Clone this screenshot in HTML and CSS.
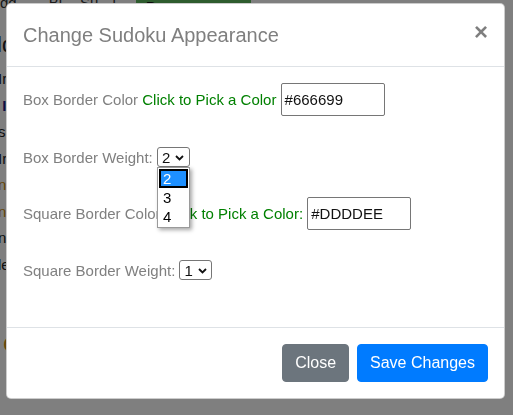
FILE: index.html
```html
<!DOCTYPE html>
<html>
<head>
<meta charset="utf-8">
<link rel="stylesheet" href="styles.css">
</head>
<body>
<div class="page">
  <div class="topbar">
    <span class="tb-a">dd</span>
    <span class="tb-b">Bl</span>
    <span class="tb-c">Su</span>
    <span class="tb-d">l</span>
    <span class="tb-btn"><span>P</span><span>▾</span></span>
  </div>
  <div class="bg-title">ld</div>
  <div class="bg-line">Ir</div>
  <div class="bg-line navy">&nbsp;I</div>
  <div class="bg-line">s</div>
  <div class="bg-line">Ir</div>
  <div class="bg-line brown">n</div>
  <div class="bg-line brown">n</div>
  <div class="bg-line">n</div>
  <div class="bg-line">le</div>
  <div class="bg-big brown">C</div>
</div>

<div class="backdrop"></div>

<div class="modal">
  <div class="modal-dialog">
    <div class="modal-header">
      <h5 class="modal-title">Change Sudoku Appearance</h5>
      <button class="close" type="button">×</button>
    </div>
    <div class="modal-body">
      <div class="row r1">
        <span class="label">Box Border Color</span>
        <span class="pick">Click to Pick a Color</span>
        <span class="hex">#666699</span>
      </div>
      <div class="row r2">
        <span class="label">Box Border Weight:</span>
        <span class="select">
          <span class="val">2</span>
          <svg class="chev" width="9" height="6" viewBox="0 0 9 6"><path d="M1 1 L4.5 4.5 L8 1" fill="none" stroke="#111" stroke-width="1.8"/></svg>
          <span class="options">
            <span class="opt sel">2</span>
            <span class="opt">3</span>
            <span class="opt">4</span>
          </span>
        </span>
      </div>
      <div class="row r3">
        <span class="label">Square Border Color</span>
        <span class="pick">Click to Pick a Color:</span>
        <span class="hex">#DDDDEE</span>
      </div>
      <div class="row r4">
        <span class="label">Square Border Weight:</span>
        <span class="select">
          <span class="val">1</span>
          <svg class="chev" width="9" height="6" viewBox="0 0 9 6"><path d="M1 1 L4.5 4.5 L8 1" fill="none" stroke="#111" stroke-width="1.8"/></svg>
        </span>
      </div>
    </div>
    <div class="modal-footer">
      <button class="btn btn-secondary" type="button">Close</button>
      <button class="btn btn-primary" type="button">Save Changes</button>
    </div>
  </div>
</div>
</body>
</html>
```
FILE: styles.css
```css
html, body {
  margin: 0;
  padding: 0;
  background: #fff;
  font-family: "Liberation Sans", Arial, sans-serif;
  overflow: hidden;
}

.page {
  width: 513px;
  height: 415px;
  color: #222;
  font-size: 15px;
}

.topbar {
  display: flex;
  align-items: flex-start;
  height: 14px;
  margin-top: -6px;
  font-size: 15px;
  line-height: 17px;
  color: #333;
}
.tb-a { margin-left: 0; }
.tb-b { margin-left: 32px; }
.tb-c { margin-left: 18px; }
.tb-d { margin-left: 14px; }
.tb-btn {
  display: flex;
  justify-content: space-between;
  width: 95px;
  height: 20px;
  margin-left: 20px;
  padding: 4px 10px 0;
  background: #5cb85c;
  color: #111;
}

.bg-title {
  margin-top: 24px;
  font-size: 22px;
  line-height: 26px;
  margin-left: -3px;
}
.bg-line {
  height: 26.5px;
  line-height: 26.5px;
  font-size: 15px;
  margin-left: -2px;
}
.bg-title + .bg-line { margin-top: 8px; }
.navy { color: #1a1a8a; font-weight: bold; }
.brown { color: #c88a10; }
.bg-big {
  margin-top: 54px;
  font-size: 22px;
  margin-left: 3px;
}

.backdrop {
  position: fixed;
  inset: 0;
  background: rgba(0, 0, 0, 0.5);
}

.modal {
  position: fixed;
  inset: 0;
  padding-top: 3px;
}

.modal-dialog {
  width: 499px;
  margin-left: 6px;
  background: #fff;
  border: 1px solid rgba(0, 0, 0, 0.2);
  border-radius: 5px;
  color: #808080;
  box-sizing: border-box;
}

.modal-header {
  display: flex;
  align-items: flex-start;
  padding: 16px;
  border-bottom: 1px solid #dee2e6;
}
.modal-title {
  margin: 0;
  font-size: 20px;
  line-height: 30px;
  font-weight: normal;
  color: #7f7f7f;
}
.close {
  margin: -16px -16px -16px auto;
  padding: 16px;
  background: transparent;
  border: 0;
  font-family: "Liberation Sans", Arial, sans-serif;
  font-size: 24px;
  font-weight: bold;
  line-height: 1;
  color: #000;
  opacity: 0.5;
}

.modal-body {
  padding: 16px 15px 45px 16px;
  font-size: 15px;
}

.row {
  display: flex;
  align-items: center;
  white-space: nowrap;
}
.r1 { height: 33px; }
.r2 { height: 24px; margin-top: 29px; }
.r3 { height: 33px; margin-top: 28px; }
.r4 { height: 24px; margin-top: 28px; }

.label { color: #808080; margin-right: 4.17px; }
.pick { color: #008000; margin-right: 4.17px; }

.hex {
  display: flex;
  align-items: center;
  box-sizing: border-box;
  width: 104px;
  height: 33px;
  padding: 0 3px;
  border: 1px solid #767676;
  border-radius: 2px;
  color: #111;
  font-size: 15px;
}

.select {
  position: relative;
  display: flex;
  align-items: center;
  box-sizing: border-box;
  width: 33px;
  height: 20px;
  padding-left: 4px;
  border: 1px solid #767676;
  border-radius: 3px;
  color: #111;
  font-size: 15px;
}
.chev { margin-left: 5px; margin-top: 1px; }

.options {
  position: absolute;
  top: 19px;
  left: -1px;
  display: flex;
  flex-direction: column;
  box-sizing: border-box;
  width: 33px;
  padding: 1px;
  background: #fff;
  border: 1px solid #9a9a9a;
  box-shadow: 2px 2px 4px rgba(0, 0, 0, 0.35);
  z-index: 2;
}
.opt {
  display: flex;
  align-items: center;
  height: 19px;
  padding-left: 4px;
  color: #000;
  font-size: 15px;
}
.opt.sel {
  background: #1e90ff;
  color: #fff;
  box-shadow: inset 0 0 0 2px #000;
}

.modal-footer {
  display: flex;
  justify-content: flex-end;
  align-items: center;
  padding: 12px;
  border-top: 1px solid #dee2e6;
}
.btn {
  margin: 4px;
  height: 38px;
  padding: 0 12px;
  border: 1px solid transparent;
  border-radius: 4px;
  font-family: "Liberation Sans", Arial, sans-serif;
  font-size: 16px;
  color: #fff;
}
.btn-secondary { background: #6c757d; border-color: #6c757d; }
.btn-primary { background: #007bff; border-color: #007bff; }
```
